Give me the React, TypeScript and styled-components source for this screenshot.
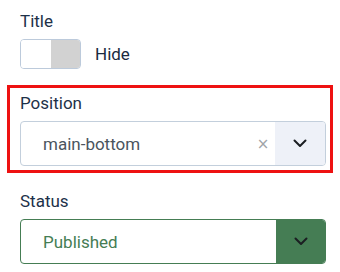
import React from "react";
import styled, { createGlobalStyle } from "styled-components";

const Global = createGlobalStyle`
  html, body { margin: 0; padding: 0; background: #ffffff; }
  body { font-family: Roboto, "Noto Sans", "Liberation Sans", sans-serif; font-size: 17px; }
`;

const Page = styled.div`
  display: flex;
  flex-direction: column;
  gap: 13px;
  width: 326px;
  padding: 6px 0 0 7px;
`;

const Group = styled.div<{ $highlight?: boolean; $padTop?: number; $padBottom?: number }>`
  display: flex;
  flex-direction: column;
  border: 3px solid ${(p) => (p.$highlight ? "#ee1111" : "transparent")};
  padding: ${(p) => p.$padTop ?? 0}px 4px ${(p) => p.$padBottom ?? 0}px 10px;
`;

const Label = styled.div`
  font-size: 17px;
  line-height: 24px;
  color: #1d3149;
  margin-bottom: 6px;
`;

const SwitchRow = styled.div`
  display: flex;
  align-items: center;
  gap: 14px;
`;

const Switch = styled.div`
  display: flex;
  width: 61px;
  height: 30px;
  box-sizing: border-box;
  border: 1px solid #bccadb;
  border-radius: 4px;
  overflow: hidden;
`;

const SwitchHalf = styled.div<{ $on?: boolean }>`
  flex: 1;
  background: ${(p) => (p.$on ? "#d2d2d2" : "#ffffff")};
`;

const SwitchText = styled.span`
  font-size: 17px;
  line-height: 24px;
  color: #1a2a40;
`;

const Select = styled.div<{ $tone: "plain" | "success" }>`
  display: flex;
  align-items: stretch;
  height: 45px;
  box-sizing: border-box;
  border: 1px solid ${(p) => (p.$tone === "success" ? "#457d54" : "#c3cfdc")};
  border-radius: 4px;
  overflow: hidden;
`;

const Value = styled.div<{ $tone: "plain" | "success" }>`
  flex: 1;
  display: flex;
  align-items: center;
  padding-left: 22px;
  font-size: 17px;
  line-height: 24px;
  color: ${(p) => (p.$tone === "success" ? "#457d54" : "#4a545e")};
`;

const Clear = styled.span`
  width: 20px;
  margin-right: 2px;
  display: flex;
  align-items: center;
  justify-content: center;
  font-size: 15px;
  color: #a0a4a8;
  font-family: "DejaVu Sans", sans-serif;
`;

const Toggle = styled.div<{ $tone: "plain" | "success" }>`
  width: ${(p) => (p.$tone === "success" ? 49 : 50)}px;
  display: flex;
  align-items: center;
  justify-content: center;
  background: ${(p) => (p.$tone === "success" ? "#457d54" : "#eef1f8")};
`;

const Chevron = () => (
  <svg width="14" height="9" viewBox="0 0 14 9" fill="none">
    <path d="M1.5 1.5 L7 7 L12.5 1.5" stroke="#1b1e22" strokeWidth="2" strokeLinecap="round" strokeLinejoin="round" />
  </svg>
);

export default function App() {
  return (
    <>
      <Global />
      <Page>
        <Group>
          <Label>Title</Label>
          <SwitchRow>
            <Switch>
              <SwitchHalf />
              <SwitchHalf $on />
            </Switch>
            <SwitchText>Hide</SwitchText>
          </SwitchRow>
        </Group>
        <Group $highlight $padTop={3} $padBottom={4}>
          <Label>Position</Label>
          <Select $tone="plain">
            <Value $tone="plain">main-bottom</Value>
            <Clear>×</Clear>
            <Toggle $tone="plain">
              <Chevron />
            </Toggle>
          </Select>
        </Group>
        <Group>
          <Label>Status</Label>
          <Select $tone="success">
            <Value $tone="success">Published</Value>
            <Toggle $tone="success">
              <Chevron />
            </Toggle>
          </Select>
        </Group>
      </Page>
    </>
  );
}
